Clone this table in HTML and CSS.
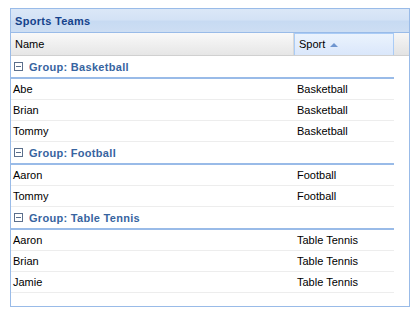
FILE: index.html
```html
<!DOCTYPE html>
<html lang="en">
<head>
  <meta charset="UTF-8">
  <title>Sports Teams</title>
  <link rel="stylesheet" href="styles.css">
</head>
<body>
  <div id="teamGrid" class="grid-panel">
    <div class="grid-title">Sports Teams</div>

    <div class="grid-cols">
      <div class="col-head">Name</div>
      <div class="col-head sorted">Sport <span class="sort-asc"></span></div>
      <div class="col-filler"></div>
    </div>

    <div class="grid-body">
      <div class="group">
        <div class="group-head"><span class="toggle"></span>Group: Basketball</div>
        <div class="row"><span>Abe</span><span>Basketball</span></div>
        <div class="row"><span>Brian</span><span>Basketball</span></div>
        <div class="row"><span>Tommy</span><span>Basketball</span></div>
      </div>

      <div class="group">
        <div class="group-head"><span class="toggle"></span>Group: Football</div>
        <div class="row"><span>Aaron</span><span>Football</span></div>
        <div class="row"><span>Tommy</span><span>Football</span></div>
      </div>

      <div class="group">
        <div class="group-head"><span class="toggle"></span>Group: Table Tennis</div>
        <div class="row"><span>Aaron</span><span>Table Tennis</span></div>
        <div class="row"><span>Brian</span><span>Table Tennis</span></div>
        <div class="row"><span>Jamie</span><span>Table Tennis</span></div>
      </div>
    </div>
  </div>
</body>
</html>
```

FILE: styles.css
```css
body {
  margin: 0;
  padding: 8px 0 0 10px;
  font-family: "Liberation Sans", Arial, sans-serif;
  font-size: 11px;
  background-color: #fff;
}

.grid-panel {
  width: 398px;
  height: 297px;
  border: 1px solid #99bbe8;
  display: flex;
  flex-direction: column;
  background-color: #fff;
}

.grid-title {
  height: 22px;
  padding-top: 1px;
  line-height: 23px;
  padding-left: 4px;
  font-weight: bold;
  letter-spacing: 0.3px;
  color: #15428b;
  border-bottom: 1px solid #99bbe8;
  background: linear-gradient(#dbe7f7 0, #d3e2f5 11px, #c7daf2 12px, #cddef3 100%);
}

.grid-cols {
  display: grid;
  grid-template-columns: 283px 100px 15px;
  height: 22px;
  border-bottom: 1px solid #d0d0d0;
  background: linear-gradient(#f9f9f9, #e6e6e6);
}

.col-head {
  line-height: 22px;
  padding-left: 4px;
  color: #000;
  border-right: 1px solid #d8d8d8;
}

.col-head.sorted {
  padding-left: 4px;
  border: 1px solid #aaccf6;
  border-bottom: none;
  line-height: 21px;
  background: linear-gradient(#ebf3fd, #dae7fb);
}

.sort-asc {
  display: inline-block;
  margin-left: 2px;
  vertical-align: 1px;
  border-left: 4px solid transparent;
  border-right: 4px solid transparent;
  border-bottom: 4px solid #6f95cf;
}

.col-filler {
  background: linear-gradient(#f6f6f6, #e3e3e3);
}

.grid-body {
  flex: 1;
  width: 383px;
}

.group-head {
  display: flex;
  align-items: center;
  height: 21px;
  padding-left: 3px;
  font-weight: bold;
  letter-spacing: 0.3px;
  color: #3764a0;
  border-bottom: 2px solid #99bbe8;
}

.toggle {
  width: 7px;
  height: 7px;
  margin-right: 6px;
  border: 1px solid #5b6f8c;
  background: linear-gradient(#5b6f8c, #5b6f8c) center / 5px 1px no-repeat, #fff;
}

.row {
  display: grid;
  grid-template-columns: 283px 100px;
  height: 20px;
  line-height: 20px;
  border-bottom: 1px solid #ededed;
}

.row span {
  padding-left: 2px;
}

.row span + span {
  padding-left: 3px;
}
```
